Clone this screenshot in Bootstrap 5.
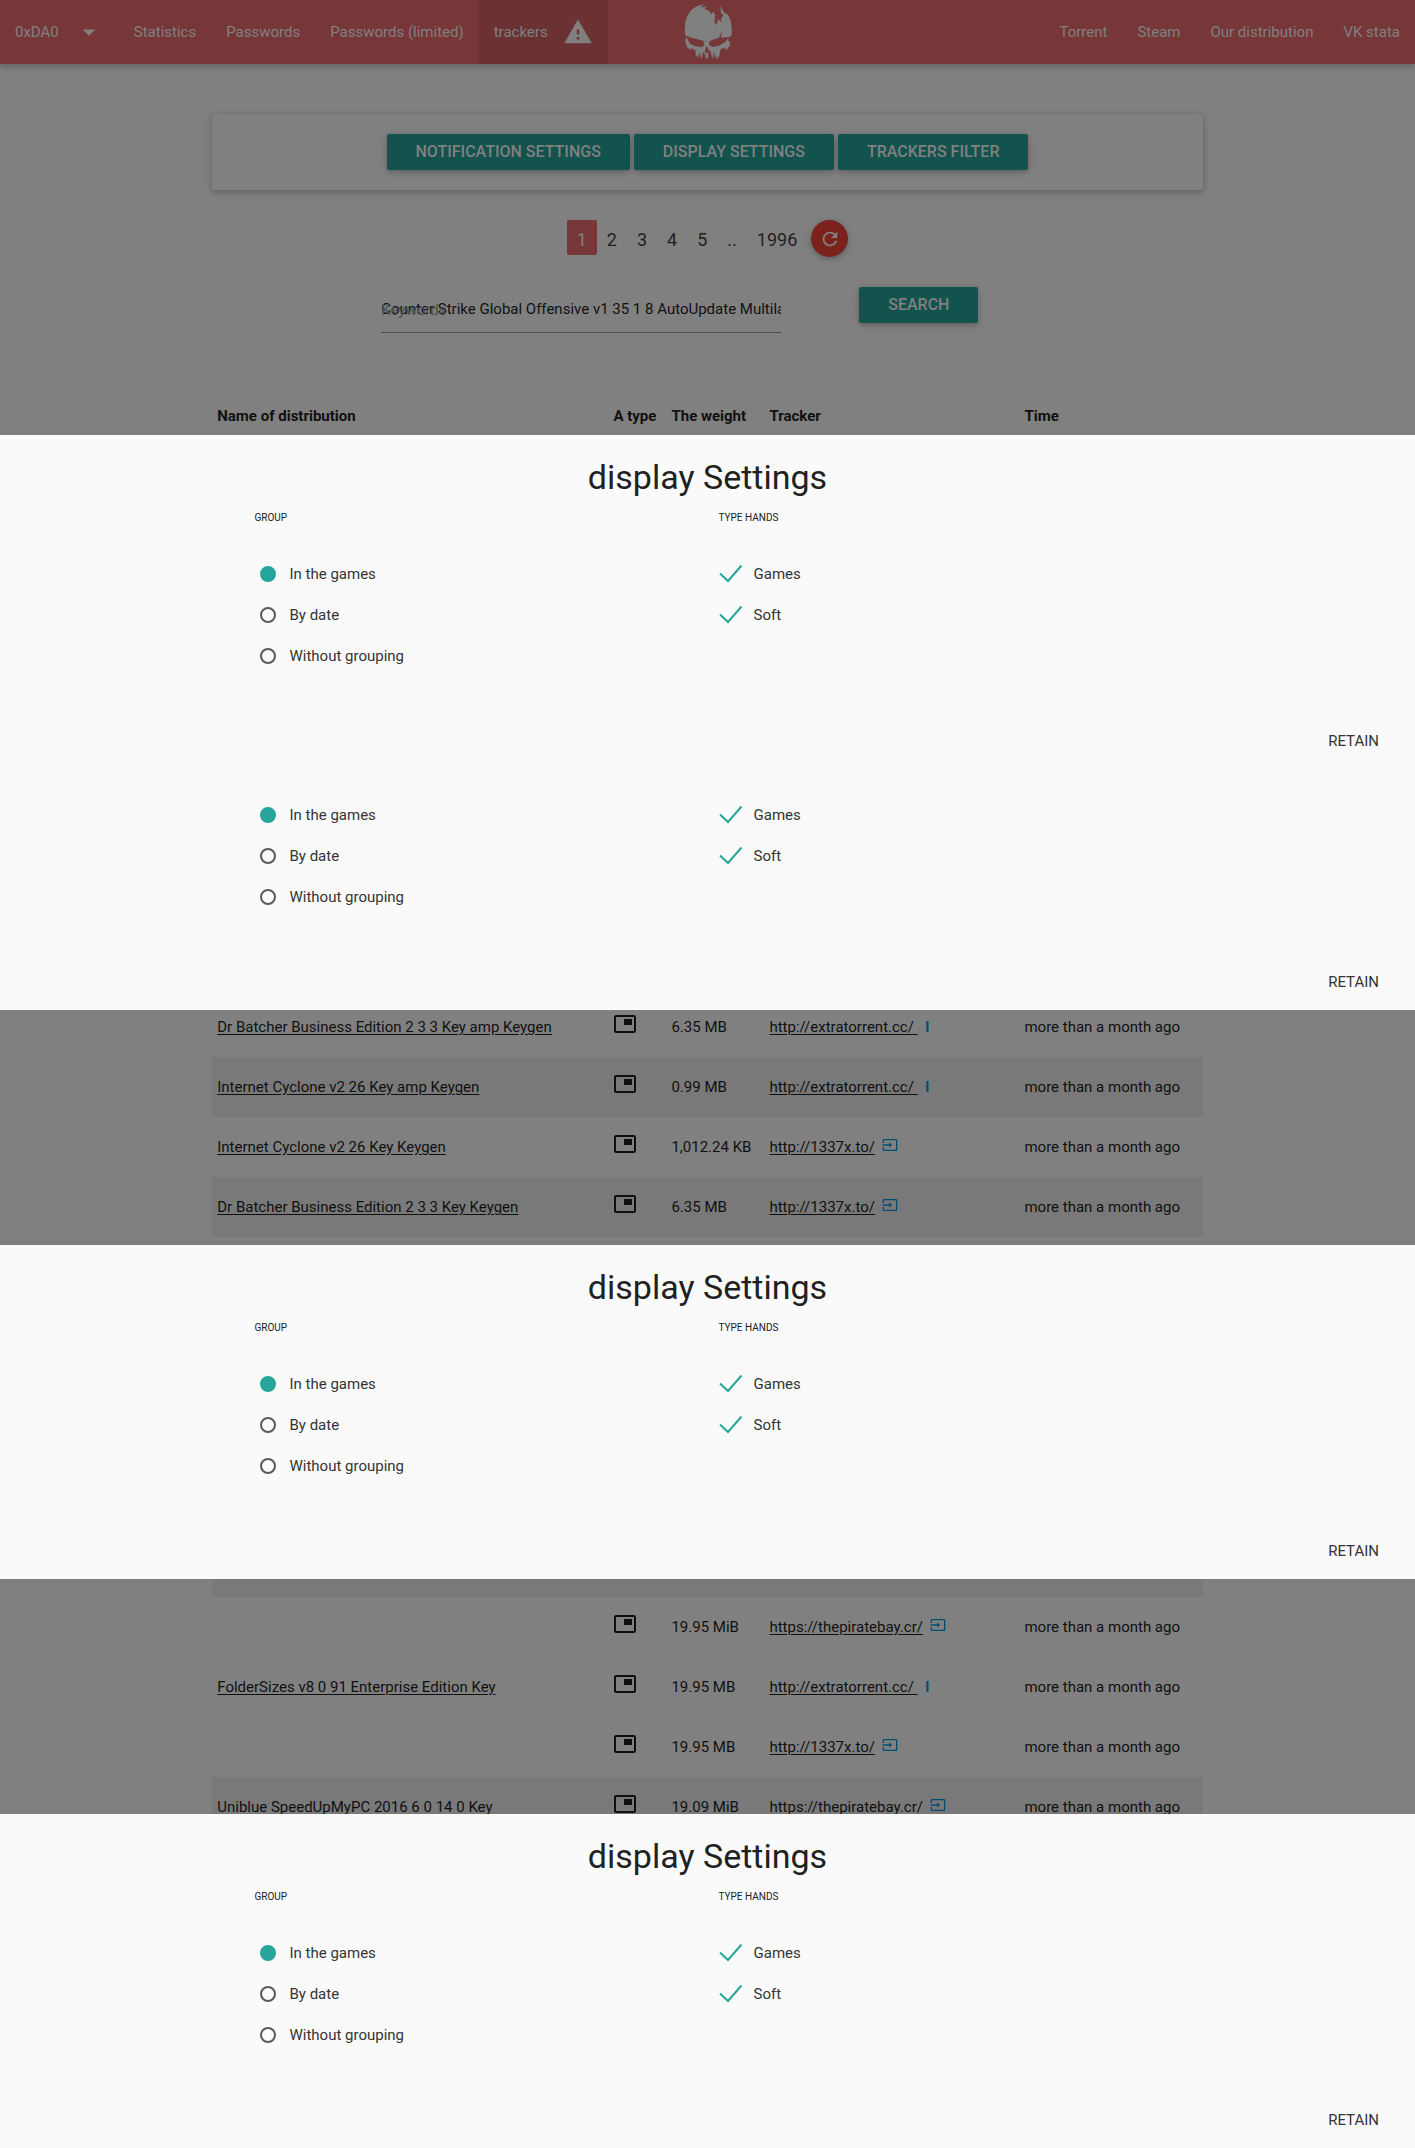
<!DOCTYPE html>
<html lang="en">
<head>
<meta charset="utf-8">
<meta name="viewport" content="width=device-width, initial-scale=1">
<title>trackers</title>
<link href="https://cdn.jsdelivr.net/npm/bootstrap@5.3.0/dist/css/bootstrap.min.css" rel="stylesheet">
<style>
  :root { --ink: #101010; --dim: #808080; --teal: #13534d; --rose: #773739; --sheet: #fafafa; }
  body { font-family: Roboto, sans-serif; font-size: 15px; line-height: 20px; color: var(--ink); background: var(--dim); overflow-x: hidden; }
  .lift { box-shadow: 0 2px 5px rgba(0,0,0,.16), 0 2px 10px rgba(0,0,0,.12); }

  .topbar { background: var(--rose); height: 64px; padding: 0; flex-wrap: nowrap; }
  .topbar .nav-link { color: #808080; font-weight: 400; height: 64px; padding: 0 15px; display: flex; align-items: center; gap: 15px; white-space: nowrap; }
  .topbar .nav-link.active { background: #6b3133; }
  .topbar .nav-link svg { width: 30px; height: 30px; fill: currentColor; }
  .skull { position: absolute; left: 50%; top: 0; transform: translateX(-50%); }
  .skull svg { display: block; width: 50px; height: 64px; fill: #808080; }

  .page-col { width: 70%; margin: 0 auto; }
  .toolbar-card { margin-top: 50px; padding: 20px; border-radius: 2px; }
  .btn-teal { --bs-btn-color: #808080; --bs-btn-bg: var(--teal); --bs-btn-hover-color: #8c8c8c; --bs-btn-hover-bg: #165e57; --bs-btn-border-width: 0; --bs-btn-border-radius: 2px; --bs-btn-font-size: 16px; --bs-btn-font-weight: 500; --bs-btn-padding-x: 29px; --bs-btn-padding-y: 0; height: 36px; line-height: 36px; text-transform: uppercase; }

  .pager { margin-top: 30px; height: 37px; }
  .pager .page-item .page-link { --bs-pagination-bg: transparent; border: 0; margin: 0; color: #222; font-size: 18px; line-height: 39px; height: 35px; padding: 0 10px; border-radius: 2px; }
  .pager .page-item.active .page-link { background: var(--rose); color: #808080; }
  .btn-round { width: 37px; height: 37px; background: #7a221b; color: #808080; border: 0; border-radius: 50%; padding: 0; margin-left: 4px; }
  .btn-round svg { width: 22px; height: 22px; fill: currentColor; display: block; margin: 0 auto; }

  .finder { margin-top: 30px; padding-left: 169px; height: 46px; gap: 78px; }
  .keyword-box { position: relative; width: 400px; height: 46px; }
  .keyword-box input { width: 100%; height: 46px; border: 0; border-bottom: 1px solid #4f4f4f; border-radius: 0; background: transparent; padding: 0 0 1px; font-size: 15px; color: var(--ink); outline: 0; }
  .keyword-box label { position: absolute; left: 0; top: 13px; color: #4f4f4f; pointer-events: none; }

  .dist-table { --bs-table-bg: transparent; --bs-table-color: var(--ink); width: 100%; margin: 0; table-layout: fixed; color: var(--ink); }
  .dist-table > :not(caption) > * > * { border: 0; padding: 20px 5px; height: 60px; line-height: 20px; vertical-align: bottom; box-shadow: none; white-space: nowrap; background: transparent; }
  .dist-head { margin-top: 53px; }
  .dist-table > thead > tr > th { font-weight: 700; padding-bottom: 9px; height: 49px; }
  .dist-table > tbody > tr.tinted > * { background: #797979; }
  .dist-table > tbody > tr.sliver > * { height: 18px; padding: 0; }
  .dist-table a { color: var(--ink); text-decoration: underline; text-underline-offset: 2px; }
  .dist-table .kind { padding-top: 15px; padding-bottom: 21px; }
  .kind svg { width: 24px; height: 24px; fill: var(--ink); display: block; }
  .dist-table .go { color: #024e73; font-weight: 700; text-decoration: none; margin-left: 4px; }
  .dist-table .go-icon { margin-left: 7px; }
  .go svg { width: 16px; height: 16px; fill: currentColor; vertical-align: -1px; }
  .c-name { width: 40%; } .c-kind { width: 58px; } .c-size { width: 98px; } .c-site { width: 255px; }

  .sheet { position: relative; z-index: 2; background: var(--sheet); color: #212121; }
  .sheet.over-after { margin-bottom: -13px; }
  .sheet.over-before { margin-top: -23px; }
  .sheet h4 { font-size: 34px; line-height: 38px; font-weight: 400; margin: 0; padding-top: 23px; text-align: center; }
  .sheet-head { height: 93px; }
  .sheet-col { max-width: 928px; margin: 0 auto; }
  .sheet-col > .row > .col-6 { padding: 0 11px; }
  .caps { font-size: 10px; line-height: 12px; margin-top: 16px; text-transform: uppercase; }
  .choices { padding-top: 25px; height: 185px; color: #343434; }
  .choice { height: 41px; display: flex; align-items: center; }
  .choice input { appearance: none; margin: 0; flex: none; }
  .choice input[type=radio] { width: 16px; height: 16px; margin: 0 14px 0 5px; border: 2px solid #5a5a5a; border-radius: 50%; }
  .choice input[type=radio]:checked { background: #26a69a; border-color: #26a69a; }
  .choice input[type=checkbox] { width: 24px; height: 20px; margin-right: 11px; }
  .choice input[type=checkbox]:checked { background: url("data:image/svg+xml,%3Csvg xmlns='http://www.w3.org/2000/svg' viewBox='0 0 24 20'%3E%3Cpath d='M1 9.5L9 17L22.5 1.5' fill='none' stroke='%2326a69a' stroke-width='2'/%3E%3C/svg%3E"); }
  .sheet-foot { height: 56px; padding-right: 6px; display: flex; align-items: center; justify-content: flex-end; }
  .sheet-foot .btn { --bs-btn-padding-x: 30px; --bs-btn-padding-y: 0; --bs-btn-font-size: 15px; --bs-btn-color: #343434; --bs-btn-border-width: 0; line-height: 36px; }
  @media (max-width: 1199px) { .finder { padding-left: 0; } .page-col { overflow-x: auto; } }
</style>
<script src="https://cdn.jsdelivr.net/npm/bootstrap@5.3.0/dist/js/bootstrap.bundle.min.js"></script>
</head>
<body>
<svg width="0" height="0" class="d-none">
  <symbol id="pip" viewBox="0 0 24 24"><path d="M19 7h-8v6h8V7zm2-4H3c-1.100 0-2 .9-2 2v14c0 1.100.9 1.980 2 1.980h18c1.100 0 2-.88 2-1.980V5c0-1.100-.9-2-2-2zm0 16.010H3V4.980h18v14.030z"/></symbol>
  <symbol id="enter" viewBox="0 0 24 24"><path d="M21 3.010H3c-1.100 0-2 .9-2 2V9h2V4.990h18v14.030H3V15H1v4.010c0 1.100.9 1.980 2 1.980h18c1.100 0 2-.88 2-1.980v-14c0-1.110-.9-2-2-2zM11 16l4-4-4-4v3H1v2h10v3z"/></symbol>
</svg>

<nav class="navbar topbar lift position-relative justify-content-between">
  <div class="d-flex">
    <a class="nav-link" href="#">0xDA0 <svg viewBox="0 0 24 24"><path d="M7 10l5 5 5-5z"/></svg></a>
    <a class="nav-link" href="#">Statistics</a>
    <a class="nav-link" href="#">Passwords</a>
    <a class="nav-link" href="#">Passwords (limited)</a>
    <a class="nav-link active" href="#" aria-current="page">trackers <svg viewBox="0 0 24 24"><path d="M1 21h22L12 2 1 21zm12-3h-2v-2h2v2zm0-4h-2v-4h2v4z"/></svg></a>
  </div>
  <a class="skull" href="#" aria-label="Home">
    <svg viewBox="72 0 150 192"><path d="M80 107L77 92 79 66 86 45 97 30 113 19 136 13 125 23 142 19 137 26 150 32 157 42 163 35 169 46 166 66 173 76 177 58 188 67 186 58 193 44 186 40 184 18 194 36 208 46 215 62 218 84 218 106 211 111 186 113 190 92 180 113 158 120 148 128 141 124 132 122 98 113Z"/><path d="M82 110L88 122 94 132 110 139 130 141 136 135 133 124 145 124 151 124 150 135 160 141 180 137 199 126 208 113 208 124 214 125 211 139 199 153 200 142 185 148 182 163 175 180 172 166 168 178 165 154 160 178 155 155 149 150 143 138 138 151 137 167 132 154 128 178 122 156 119 175 115 164 111 172 109 150 93 144 97 154 84 140 78 124Z"/><path d="M139 158h9v18l-5-3-4 2z"/></svg>
  </a>
  <div class="d-flex">
    <a class="nav-link" href="#">Torrent</a>
    <a class="nav-link" href="#">Steam</a>
    <a class="nav-link" href="#">Our distribution</a>
    <a class="nav-link" href="#">VK stata</a>
  </div>
</nav>

<main>
  <div class="page-col">
    <div class="toolbar-card lift d-flex justify-content-center gap-1">
      <button type="button" class="btn btn-teal lift">Notification settings</button>
      <button type="button" class="btn btn-teal lift">Display Settings</button>
      <button type="button" class="btn btn-teal lift">Trackers filter</button>
    </div>
    <div class="pager d-flex justify-content-center">
      <ul class="pagination mb-0">
        <li class="page-item active"><a class="page-link" href="#">1</a></li>
        <li class="page-item"><a class="page-link" href="#">2</a></li>
        <li class="page-item"><a class="page-link" href="#">3</a></li>
        <li class="page-item"><a class="page-link" href="#">4</a></li>
        <li class="page-item"><a class="page-link" href="#">5</a></li>
        <li class="page-item"><a class="page-link" href="#">..</a></li>
        <li class="page-item"><a class="page-link" href="#">1996</a></li>
      </ul>
      <button type="button" class="btn-round lift" aria-label="Refresh"><svg viewBox="0 0 24 24"><path d="M17.650 6.350C16.200 4.900 14.210 4 12 4c-4.420 0-7.990 3.580-7.990 8s3.570 8 7.990 8c3.730 0 6.840-2.550 7.730-6h-2.080c-.82 2.330-3.040 4-5.650 4-3.310 0-6-2.690-6-6s2.690-6 6-6c1.660 0 3.140.69 4.220 1.780L13 11h7V4l-2.350 2.350z"/></svg></button>
    </div>
    <form class="finder d-flex">
      <div class="keyword-box">
        <label for="kw">Keywords</label>
        <input id="kw" type="text" value="Counter Strike Global Offensive v1 35 1 8 AutoUpdate Multilanguage">
      </div>
      <button type="button" class="btn btn-teal lift">Search</button>
    </form>
    <table class="table dist-table dist-head">
      <colgroup><col class="c-name"><col class="c-kind"><col class="c-size"><col class="c-site"><col></colgroup>
      <thead><tr><th>Name of distribution</th><th>A type</th><th>The weight</th><th>Tracker</th><th>Time</th></tr></thead>
    </table>
  </div>

  <section class="sheet over-after">
    <div class="sheet-head">
      <h4>display Settings</h4>
      <div class="sheet-col"><div class="row g-0"><div class="col-6"><div class="caps">Group</div></div><div class="col-6"><div class="caps">Type hands</div></div></div></div>
    </div>
    <div class="sheet-col choices"><div class="row g-0">
      <div class="col-6">
        <label class="choice"><input type="radio" name="g1" checked>In the games</label>
        <label class="choice"><input type="radio" name="g1">By date</label>
        <label class="choice"><input type="radio" name="g1">Without grouping</label>
      </div>
      <div class="col-6">
        <label class="choice"><input type="checkbox" checked>Games</label>
        <label class="choice"><input type="checkbox" checked>Soft</label>
      </div>
    </div></div>
    <div class="sheet-foot"><button type="button" class="btn">RETAIN</button></div>
    <div class="sheet-col choices"><div class="row g-0">
      <div class="col-6">
        <label class="choice"><input type="radio" name="g2" checked>In the games</label>
        <label class="choice"><input type="radio" name="g2">By date</label>
        <label class="choice"><input type="radio" name="g2">Without grouping</label>
      </div>
      <div class="col-6">
        <label class="choice"><input type="checkbox" checked>Games</label>
        <label class="choice"><input type="checkbox" checked>Soft</label>
      </div>
    </div></div>
    <div class="sheet-foot"><button type="button" class="btn">RETAIN</button></div>
  </section>

  <div class="page-col pb-2">
    <table class="table dist-table">
      <colgroup><col class="c-name"><col class="c-kind"><col class="c-size"><col class="c-site"><col></colgroup>
      <tbody>
        <tr><td><a href="#">Dr Batcher Business Edition 2 3 3 Key amp Keygen</a></td><td class="kind"><svg><use href="#pip"/></svg></td><td>6.35 MB</td><td><a href="#">http://extratorrent.cc/&nbsp;</a> <a class="go" href="#">l</a></td><td>more than a month ago</td></tr>
        <tr class="tinted"><td><a href="#">Internet Cyclone v2 26 Key amp Keygen</a></td><td class="kind"><svg><use href="#pip"/></svg></td><td>0.99 MB</td><td><a href="#">http://extratorrent.cc/&nbsp;</a> <a class="go" href="#">l</a></td><td>more than a month ago</td></tr>
        <tr><td><a href="#">Internet Cyclone v2 26 Key Keygen</a></td><td class="kind"><svg><use href="#pip"/></svg></td><td>1,012.24 KB</td><td><a href="#">http://1337x.to/</a><a class="go go-icon" href="#" aria-label="Open"><svg><use href="#enter"/></svg></a></td><td>more than a month ago</td></tr>
        <tr class="tinted"><td><a href="#">Dr Batcher Business Edition 2 3 3 Key Keygen</a></td><td class="kind"><svg><use href="#pip"/></svg></td><td>6.35 MB</td><td><a href="#">http://1337x.to/</a><a class="go go-icon" href="#" aria-label="Open"><svg><use href="#enter"/></svg></a></td><td>more than a month ago</td></tr>
      </tbody>
    </table>
  </div>

  <section class="sheet">
    <div class="sheet-head">
      <h4>display Settings</h4>
      <div class="sheet-col"><div class="row g-0"><div class="col-6"><div class="caps">Group</div></div><div class="col-6"><div class="caps">Type hands</div></div></div></div>
    </div>
    <div class="sheet-col choices"><div class="row g-0">
      <div class="col-6">
        <label class="choice"><input type="radio" name="g3" checked>In the games</label>
        <label class="choice"><input type="radio" name="g3">By date</label>
        <label class="choice"><input type="radio" name="g3">Without grouping</label>
      </div>
      <div class="col-6">
        <label class="choice"><input type="checkbox" checked>Games</label>
        <label class="choice"><input type="checkbox" checked>Soft</label>
      </div>
    </div></div>
    <div class="sheet-foot"><button type="button" class="btn">RETAIN</button></div>
  </section>

  <div class="page-col">
    <table class="table dist-table">
      <colgroup><col class="c-name"><col class="c-kind"><col class="c-size"><col class="c-site"><col></colgroup>
      <tbody>
        <tr class="tinted sliver"><td colspan="5"></td></tr>
        <tr><td></td><td class="kind"><svg><use href="#pip"/></svg></td><td>19.95 MiB</td><td><a href="#">https://thepiratebay.cr/</a><a class="go go-icon" href="#" aria-label="Open"><svg><use href="#enter"/></svg></a></td><td>more than a month ago</td></tr>
        <tr><td><a href="#">FolderSizes v8 0 91 Enterprise Edition Key</a></td><td class="kind"><svg><use href="#pip"/></svg></td><td>19.95 MB</td><td><a href="#">http://extratorrent.cc/&nbsp;</a> <a class="go" href="#">l</a></td><td>more than a month ago</td></tr>
        <tr><td></td><td class="kind"><svg><use href="#pip"/></svg></td><td>19.95 MB</td><td><a href="#">http://1337x.to/</a><a class="go go-icon" href="#" aria-label="Open"><svg><use href="#enter"/></svg></a></td><td>more than a month ago</td></tr>
        <tr class="tinted"><td><a href="#">Uniblue SpeedUpMyPC 2016 6 0 14 0 Key</a></td><td class="kind"><svg><use href="#pip"/></svg></td><td>19.09 MiB</td><td><a href="#">https://thepiratebay.cr/</a><a class="go go-icon" href="#" aria-label="Open"><svg><use href="#enter"/></svg></a></td><td>more than a month ago</td></tr>
      </tbody>
    </table>
  </div>

  <section class="sheet over-before">
    <div class="sheet-head">
      <h4>display Settings</h4>
      <div class="sheet-col"><div class="row g-0"><div class="col-6"><div class="caps">Group</div></div><div class="col-6"><div class="caps">Type hands</div></div></div></div>
    </div>
    <div class="sheet-col choices"><div class="row g-0">
      <div class="col-6">
        <label class="choice"><input type="radio" name="g4" checked>In the games</label>
        <label class="choice"><input type="radio" name="g4">By date</label>
        <label class="choice"><input type="radio" name="g4">Without grouping</label>
      </div>
      <div class="col-6">
        <label class="choice"><input type="checkbox" checked>Games</label>
        <label class="choice"><input type="checkbox" checked>Soft</label>
      </div>
    </div></div>
    <div class="sheet-foot"><button type="button" class="btn">RETAIN</button></div>
  </section>
</main>
</body>
</html>
